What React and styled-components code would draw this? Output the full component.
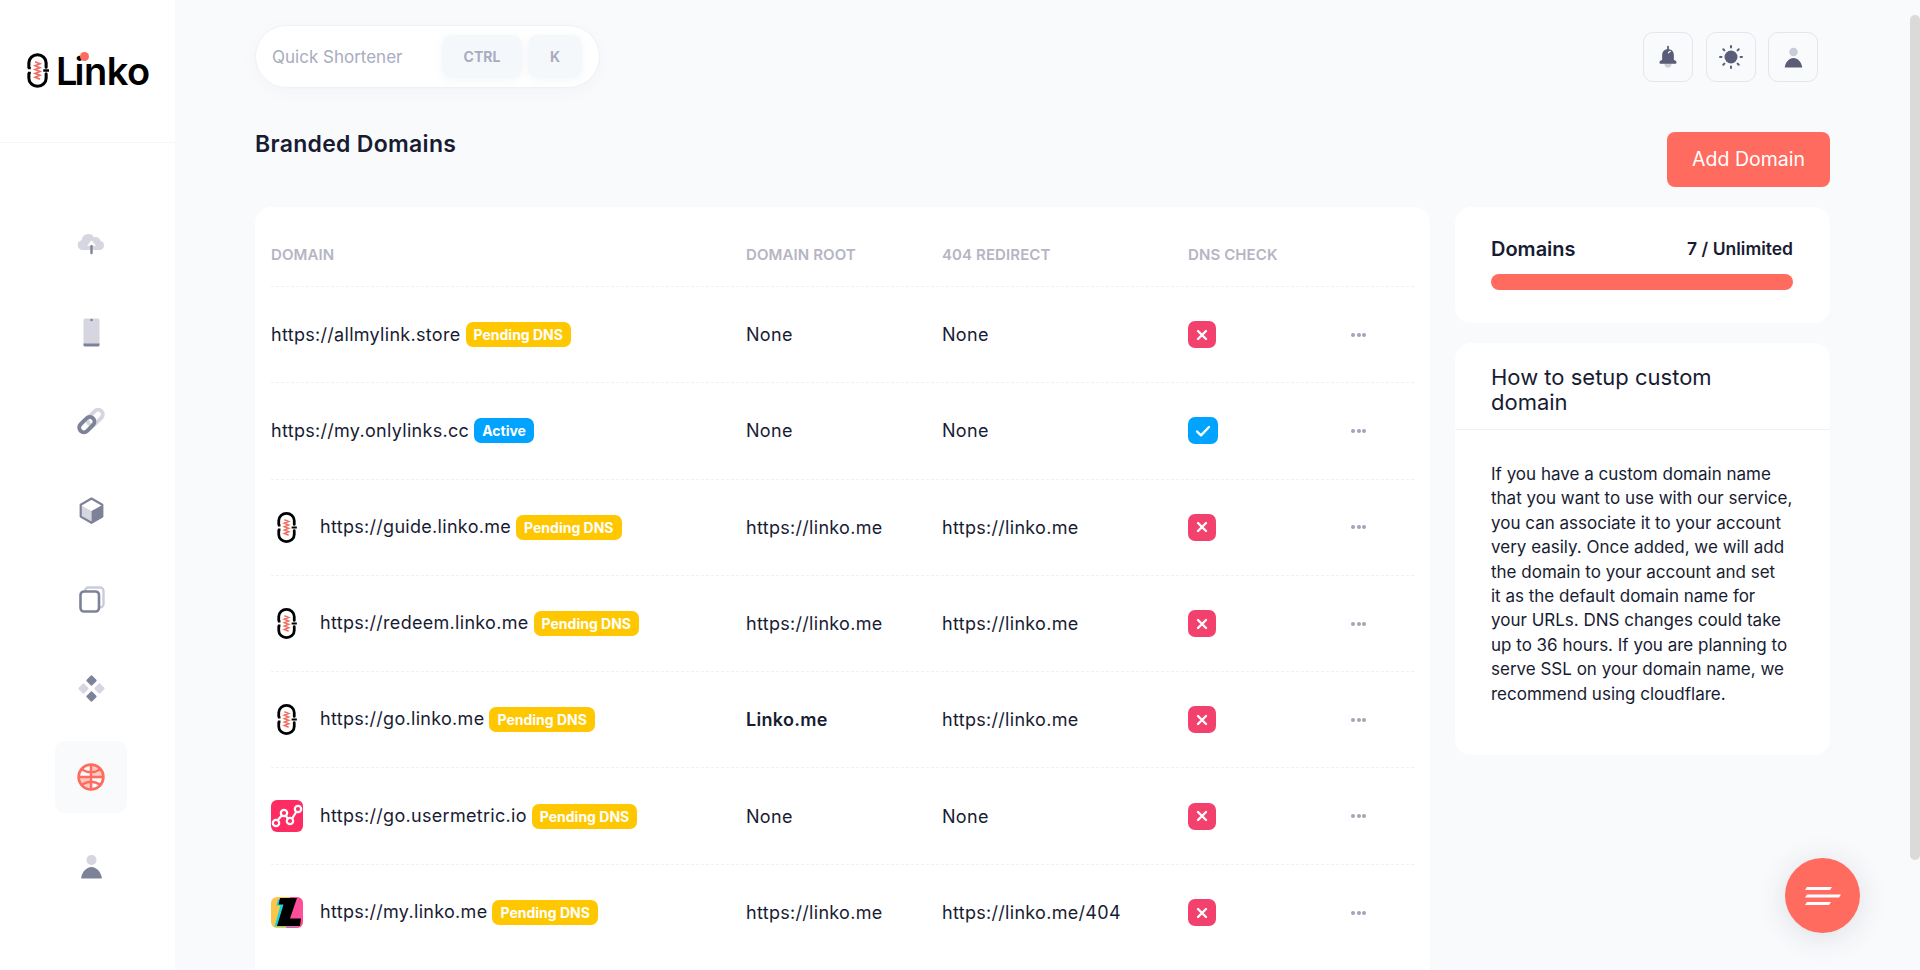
import React from 'react'
import styled, { createGlobalStyle } from 'styled-components'

const GlobalStyle = createGlobalStyle`
  html, body {
    margin: 0;
    padding: 0;
    height: 100%;
    overflow: hidden;
    background: #f9fafc;
  }
  * {
    box-sizing: border-box;
  }
  body {
    font-family: "Inter", "Noto Sans", sans-serif;
    color: #181c32;
  }
`

const DARK = '#7e8299'
const LIGHT = '#d5d6e0'
const CORAL = '#ff6b5f'

const CloudIcon = () => (
  <svg width="29" height="29" viewBox="0 0 27 27">
    <path fill={LIGHT} d="M5 19.500a4.600 4.600 0 0 1-.6-9.100A6.200 6.200 0 0 1 15.800 7.600a4.700 4.700 0 0 1 6 3.300 4.400 4.400 0 0 1-.3 8.600z" />
    <path fill="#fff" d="M13.500 10.500l4.200 5h-8.400z" />
    <rect x="12.400" y="15" width="2.200" height="8.500" rx="1" fill={DARK} />
  </svg>
)

const PhoneIcon = () => (
  <svg width="27" height="29" viewBox="0 0 27 29">
    <rect x="5.500" y="0.500" width="16" height="27.500" rx="1.500" fill={LIGHT} />
    <path fill={DARK} d="M5.500 25.500h16V27a1.500 1.500 0 0 1-1.500 1.500H7A1.500 1.500 0 0 1 5.500 27z" />
    <circle cx="13.500" cy="2" r="1.300" fill={DARK} />
  </svg>
)

const LinkIcon = () => (
  <svg width="28" height="28" viewBox="0 0 27 27" fill="none">
    <rect x="9" y="5.500" width="17" height="9" rx="4.500" stroke={LIGHT} strokeWidth="3.800" transform="rotate(-45 17.500 10)" />
    <rect x="1" y="12.500" width="17" height="9" rx="4.500" stroke={DARK} strokeWidth="3.800" transform="rotate(-45 9.500 17)" />
  </svg>
)

const BoxIcon = () => (
  <svg width="27" height="27" viewBox="0 0 27 27">
    <path fill="#fff" d="M13.500 1.500l10.500 6-10.500 6-10.500-6z" />
    <path fill={LIGHT} d="M2.500 8l11 6v12l-11-6z" />
    <path fill={DARK} d="M24.500 8l-11 6v12l11-6z" />
    <path fill="none" stroke={DARK} strokeWidth="2.200" strokeLinejoin="round" d="M13.500 1.500l10.800 6.200v11.900l-10.800 6.200-10.800-6.200V7.700z" />
  </svg>
)

const CopyIcon = () => (
  <svg width="27" height="27" viewBox="0 0 27 27" fill="none">
    <rect x="7" y="1.500" width="18.500" height="20" rx="3.500" stroke="#cbccd9" strokeWidth="2.400" />
    <rect x="2.500" y="5.500" width="18.500" height="20" rx="3.500" fill="#fff" stroke={DARK} strokeWidth="2.600" />
  </svg>
)

const DiamondIcon = () => (
  <svg width="27" height="27" viewBox="0 0 27 27">
    <rect x="9.500" y="1.500" width="8" height="8" rx="1.500" fill={DARK} transform="rotate(45 13.500 5.500)" />
    <rect x="9.500" y="17.500" width="8" height="8" rx="1.500" fill={DARK} transform="rotate(45 13.500 21.500)" />
    <rect x="1.500" y="9.500" width="8" height="8" rx="1.500" fill={LIGHT} transform="rotate(45 5.500 13.500)" />
    <rect x="17.500" y="9.500" width="8" height="8" rx="1.500" fill={LIGHT} transform="rotate(45 21.500 13.500)" />
  </svg>
)

const GlobeIcon = () => (
  <svg width="28" height="28" viewBox="0 0 28 28" fill="none">
    <path fill="#ffc9c4" d="M15 2.500a11.500 11.500 0 0 1 10.500 10.500H15zM3 15h10v9.500A11.500 11.500 0 0 1 3 15z" />
    <circle cx="14" cy="14" r="12.300" stroke={CORAL} strokeWidth="2.800" />
    <path stroke={CORAL} strokeWidth="2.400" d="M2 14h24M14 2v24M5 6.500Q14 12 23 6.500M5 21.500Q14 16 23 21.500" />
  </svg>
)

const PersonIcon = ({ size = 25, head = LIGHT, body = DARK }) => (
  <svg width={size} height={size} viewBox="0 0 27 27">
    <circle cx="13.500" cy="6.500" r="5.500" fill={head} />
    <path fill={body} d="M3 26.500c-.4 0-.8-.4-.7-.9C3.300 19.500 8 14 13.500 14s10.200 5.500 11.200 11.600c.1.500-.3.900-.7.900z" />
  </svg>
)

const BellIcon = () => (
  <svg width="18" height="24" viewBox="0 0 20 26">
    <circle cx="10" cy="21" r="3.800" fill="#cdced8" />
    <rect x="9" y="0.500" width="2" height="5" rx="1" fill="#5a5d78" />
    <path fill="#5a5d78" d="M3.500 10.500a6.500 6.500 0 0 1 13 0V16l2.200 1.500c.6.400.8 1 .8 1.500 0 1-.6 1.500-1.500 1.500H2c-.9 0-1.500-.5-1.500-1.500 0-.5.200-1.100.8-1.500L3.500 16z" />
    <path fill="none" stroke="#fff" strokeWidth="1.300" strokeLinecap="round" d="M10.500 8.500c.3-1 1-1.500 2-1.700" />
  </svg>
)

const SunIcon = () => (
  <svg width="24" height="24" viewBox="0 0 24 24">
    <circle cx="12" cy="12" r="6.500" fill="#5a5d78" />
    <path stroke="#5a5d78" strokeWidth="2" strokeLinecap="round" d="M12 1v1.500M12 21.500V23M1 12h1.500M21.500 12H23M4.300 4.300l1.100 1.100M18.600 18.600l1.100 1.100M4.300 19.700l1.100-1.100M18.600 5.400l1.100-1.100" />
  </svg>
)

const LinkoMark = ({ width = 23, height = 35 }) => (
  <svg width={width} height={height} viewBox="0 0 24 36" fill="none">
    <path stroke="#ef6f65" strokeWidth="1.800" d="M9.500 9l5 2-5 2 5 2-5 2 5 2-5 2 5 2-5 2 5 2" />
    <path stroke="#000" strokeWidth="3.200" strokeLinecap="round" d="M3 14.500V10a9 8.400 0 0 1 18 0v4.500M3 21.500V26a9 8.400 0 0 0 18 0v-4.500" />
    <path stroke="#000" strokeWidth="2.400" d="M2 15.500h3M2 20.500h3M18 18h6" />
  </svg>
)

const MetricLogo = () => (
  <svg width="32" height="32" viewBox="0 0 32 32" fill="none">
    <rect width="32" height="32" rx="6" fill="#ff2c63" />
    <path stroke="#fff" strokeWidth="2.200" d="M5 22l8-9 6 9 8-13" />
    <g fill="#ff2c63" stroke="#fff" strokeWidth="2.200">
      <circle cx="5" cy="23" r="3.200" />
      <circle cx="13" cy="13" r="3.200" />
      <circle cx="19" cy="21" r="3.200" />
      <circle cx="27" cy="9" r="3.200" />
    </g>
  </svg>
)

const ZedLogo = () => (
  <svg width="32" height="32" viewBox="0 0 32 32">
    <rect width="32" height="31" rx="6" fill="#fdc64a" />
    <path fill="#ff4f9a" d="M19 0h7a6 6 0 0 1 6 6v19a6 6 0 0 1-6 6H15z" />
    <path fill="#16d6d8" d="M7 2.500h17l-6.500 20h10l-1.300 7H3.500l6-21H5.500z" />
    <path fill="#000" d="M9 1h17l-7 20.500h11L29 29H6l6.500-21.500H7.500z" />
  </svg>
)

const XMark = () => (
  <svg width="12" height="12" viewBox="0 0 12 12">
    <path stroke="#fff" strokeWidth="2.400" strokeLinecap="round" d="M2 2l8 8M10 2l-8 8" />
  </svg>
)

const CheckMark = () => (
  <svg width="16" height="12" viewBox="0 0 16 12" fill="none">
    <path stroke="#fff" strokeWidth="2.400" strokeLinecap="round" strokeLinejoin="round" d="M2 6.500l4 3.800L14 2" />
  </svg>
)

const Shell = styled.div`
  display: flex;
  height: 100vh;
  overflow: hidden;
  background: #f9fafc;
`

const Sidebar = styled.aside`
  flex: 0 0 175px;
  background: #fff;
`

const Brand = styled.div`
  height: 143px;
  padding: 0 0 1px 26px;
  display: flex;
  align-items: center;
  gap: 7px;
  border-bottom: 1px solid #f5f6f9;
`

const BrandName = styled.span`
  position: relative;
  font-size: 38px;
  font-weight: 600;
  letter-spacing: -0.5px;
  color: #000;
`

const BrandInitial = styled.span`
  margin-right: -2.500px;
`

const BrandDot = styled.i`
  position: absolute;
  left: 23.500px;
  top: 4.500px;
  width: 9px;
  height: 9px;
  border-radius: 50%;
  background: ${CORAL};
`

const Nav = styled.nav`
  display: flex;
  flex-direction: column;
  gap: 17px;
  padding: 64px 0 0 55px;
`

const NavItem = styled.a`
  width: 72px;
  height: 72px;
  display: flex;
  align-items: center;
  justify-content: center;
  border-radius: 10px;
  background: ${p => (p.$active ? '#f9fafc' : 'transparent')};
`

const Main = styled.main`
  flex: 1;
  min-width: 0;
  padding: 25px 90px 0 80px;
`

const Topbar = styled.div`
  display: flex;
  justify-content: space-between;
  height: 63px;
`

const Search = styled.div`
  width: 345px;
  height: 63px;
  display: flex;
  align-items: center;
  padding: 0 17px 0 16px;
  background: #fff;
  border: 1px solid #eff2f5;
  border-radius: 32px;
  box-shadow: 0 4px 14px rgba(120, 130, 160, 0.05);
`

const Placeholder = styled.span`
  flex: 1;
  font-size: 17px;
  color: #a9acc0;
`

const Key = styled.span`
  height: 43px;
  width: ${p => p.$width}px;
  margin-left: ${p => p.$gap}px;
  display: flex;
  align-items: center;
  justify-content: center;
  font-size: 14px;
  font-weight: 700;
  color: #a9acc0;
  background: #f5f8fa;
  border-radius: 10px;
  box-shadow: 0 2px 8px rgba(120, 130, 160, 0.08);
`

const Actions = styled.div`
  display: flex;
  gap: 12.500px;
  padding: 7px 12px 0 0;
`

const IconButton = styled.button`
  width: 50px;
  height: 50px;
  padding: 0;
  display: flex;
  align-items: center;
  justify-content: center;
  background: transparent;
  border: 1px solid #e4e6ef;
  border-radius: 10px;
`

const TitleRow = styled.div`
  display: flex;
  justify-content: space-between;
  margin: 44px 0 20px;
`

const Title = styled.h1`
  margin: 0;
  font-size: 23px;
  line-height: 24px;
  font-weight: 600;
  letter-spacing: 0.3px;
`

const AddButton = styled.button`
  width: 163px;
  height: 55px;
  padding: 0 0 2px;
  font-family: inherit;
  font-size: 19.500px;
  color: #fff;
  background: ${CORAL};
  border: 0;
  border-radius: 8px;
`

const Columns = styled.div`
  display: grid;
  grid-template-columns: 1175px 375px;
  gap: 25px;
`

const TableCard = styled.section`
  padding: 0 16px;
  height: 800px;
  background: #fff;
  border-radius: 16px;
`

const Row = styled.div`
  display: grid;
  grid-template-columns: 475px 196px 246px 157px 1fr;
  align-items: center;
  height: ${p => (p.$head ? 80 : 96.3)}px;
  padding-top: ${p => (p.$head ? 16 : 0)}px;
  border-bottom: 1px dashed #eff2f5;
  font-size: 18px;
  letter-spacing: 0.3px;

  &:last-child {
    border-bottom: 0;
  }
`

const HeadCell = styled.span`
  font-size: 15px;
  font-weight: 600;
  letter-spacing: 0.1px;
  color: #b5b5c3;
`

const DomainCell = styled.div`
  display: flex;
  align-items: center;
`

const Favicon = styled.span`
  flex: 0 0 49px;
  display: flex;
  padding-left: ${p => (p.$mark ? 5 : 0)}px;
`

const Url = styled.span`
  margin: 0 5px ${p => (p.$raised ? 2 : 0)}px 0;
`

const Badge = styled.span`
  height: 25px;
  padding: 0 8px;
  display: inline-flex;
  align-items: center;
  font-size: 14px;
  font-weight: 700;
  letter-spacing: 0;
  color: #fff;
  background: ${p => p.$color};
  border-radius: 7px;
`

const StrongCell = styled.span`
  font-weight: 600;
`

const Status = styled.span`
  width: ${p => (p.$ok ? 30 : 28)}px;
  height: 27px;
  display: flex;
  align-items: center;
  justify-content: center;
  background: ${p => (p.$ok ? '#00a3ff' : '#f1416c')};
  border-radius: 7px;
`

const Dots = styled.span`
  display: flex;
  gap: 1.500px;
  padding-left: 6px;

  i {
    width: 4px;
    height: 4px;
    border-radius: 50%;
    background: #a1a5b7;
  }
`

const SideColumn = styled.div`
  display: flex;
  flex-direction: column;
  gap: 20px;
`

const Card = styled.section`
  background: #fff;
  border-radius: 16px;
`

const QuotaBody = styled.div`
  height: 116px;
  padding: 30px 37px 0 36px;
`

const QuotaHead = styled.div`
  display: flex;
  justify-content: space-between;
  align-items: flex-start;
  height: 37px;
  font-size: 20px;
  font-weight: 600;
`

const QuotaCount = styled.span`
  padding-top: 1px;
  font-size: 17.500px;
`

const Bar = styled.div`
  height: 16px;
  background: ${CORAL};
  border-radius: 8px;
`

const HelpTitle = styled.h2`
  margin: 0;
  padding: 22px 100px 15px 36px;
  font-size: 22px;
  line-height: 24.500px;
  font-weight: 400;
  border-bottom: 1px solid #eff2f5;
`

const HelpText = styled.p`
  margin: 0;
  padding: 32px 20px 49px 36px;
  font-size: 17px;
  line-height: 24.400px;
  white-space: pre-line;
`

const ScrollThumb = styled.div`
  position: fixed;
  top: 15px;
  right: 0;
  width: 10px;
  height: 845px;
  background: #dcd9d9;
  border-radius: 5px;
`

const Fab = styled.button`
  position: fixed;
  left: 1785px;
  top: 858px;
  width: 75px;
  height: 75px;
  padding: 0;
  display: flex;
  align-items: center;
  justify-content: center;
  background: ${CORAL};
  border: 0;
  border-radius: 50%;
  box-shadow: 0 4px 30px rgba(60, 60, 80, 0.14);
`

const domains = [
  { url: 'https://allmylink.store', root: 'None', redirect: 'None' },
  { url: 'https://my.onlylinks.cc', active: true, root: 'None', redirect: 'None', ok: true },
  { url: 'https://guide.linko.me', logo: 'linko', root: 'https://linko.me', redirect: 'https://linko.me' },
  { url: 'https://redeem.linko.me', logo: 'linko', root: 'https://linko.me', redirect: 'https://linko.me' },
  { url: 'https://go.linko.me', logo: 'linko', root: 'Linko.me', strong: true, redirect: 'https://linko.me' },
  { url: 'https://go.usermetric.io', logo: 'metric', root: 'None', redirect: 'None' },
  { url: 'https://my.linko.me', logo: 'zed', root: 'https://linko.me', redirect: 'https://linko.me/404' },
]

const helpText = `If you have a custom domain name
that you want to use with our service,
you can associate it to your account
very easily. Once added, we will add
the domain to your account and set
it as the default domain name for
your URLs. DNS changes could take
up to 36 hours. If you are planning to
serve SSL on your domain name, we
recommend using cloudflare.`

const logos = {
  linko: <LinkoMark width={21} height={31} />,
  metric: <MetricLogo />,
  zed: <ZedLogo />,
}

const App = () => {
  return (
    <Shell>
      <GlobalStyle />
      <Sidebar>
        <Brand>
          <LinkoMark />
          <BrandName>
            <BrandInitial>L</BrandInitial>inko
            <BrandDot />
          </BrandName>
        </Brand>
        <Nav>
          <NavItem><CloudIcon /></NavItem>
          <NavItem><PhoneIcon /></NavItem>
          <NavItem><LinkIcon /></NavItem>
          <NavItem><BoxIcon /></NavItem>
          <NavItem><CopyIcon /></NavItem>
          <NavItem><DiamondIcon /></NavItem>
          <NavItem $active><GlobeIcon /></NavItem>
          <NavItem><PersonIcon /></NavItem>
        </Nav>
      </Sidebar>
      <Main>
        <Topbar>
          <Search>
            <Placeholder>Quick Shortener</Placeholder>
            <Key $width={80} $gap={0}>CTRL</Key>
            <Key $width={54} $gap={6}>K</Key>
          </Search>
          <Actions>
            <IconButton><BellIcon /></IconButton>
            <IconButton><SunIcon /></IconButton>
            <IconButton><PersonIcon size={21} head="#c9cbd6" body="#5a5d78" /></IconButton>
          </Actions>
        </Topbar>
        <TitleRow>
          <Title>Branded Domains</Title>
          <AddButton>Add Domain</AddButton>
        </TitleRow>
        <Columns>
          <TableCard>
            <Row $head>
              <HeadCell>DOMAIN</HeadCell>
              <HeadCell>DOMAIN ROOT</HeadCell>
              <HeadCell>404 REDIRECT</HeadCell>
              <HeadCell>DNS CHECK</HeadCell>
            </Row>
            {domains.map(d => (
              <Row key={d.url}>
                <DomainCell>
                  {d.logo && <Favicon $mark={d.logo === 'linko'}>{logos[d.logo]}</Favicon>}
                  <Url $raised={!!d.logo}>{d.url}</Url>
                  {d.active
                    ? <Badge $color="#00a3ff">Active</Badge>
                    : <Badge $color="#ffc700">Pending DNS</Badge>}
                </DomainCell>
                {d.strong ? <StrongCell>{d.root}</StrongCell> : <span>{d.root}</span>}
                <span>{d.redirect}</span>
                <Status $ok={d.ok}>{d.ok ? <CheckMark /> : <XMark />}</Status>
                <Dots><i /><i /><i /></Dots>
              </Row>
            ))}
          </TableCard>
          <SideColumn>
            <Card>
              <QuotaBody>
                <QuotaHead>
                  <span>Domains</span>
                  <QuotaCount>7 / Unlimited</QuotaCount>
                </QuotaHead>
                <Bar />
              </QuotaBody>
            </Card>
            <Card>
              <HelpTitle>How to setup custom domain</HelpTitle>
              <HelpText>{helpText}</HelpText>
            </Card>
          </SideColumn>
        </Columns>
      </Main>
      <ScrollThumb />
      <Fab>
        <svg width="36" height="18" viewBox="0 0 36 18">
          <path fill="#fff" d="M2 0h25l-2 3H0zM2 7.500h34l-2 3H0zM2 15h24l-2 3H0z" />
        </svg>
      </Fab>
    </Shell>
  )
}

export default App
